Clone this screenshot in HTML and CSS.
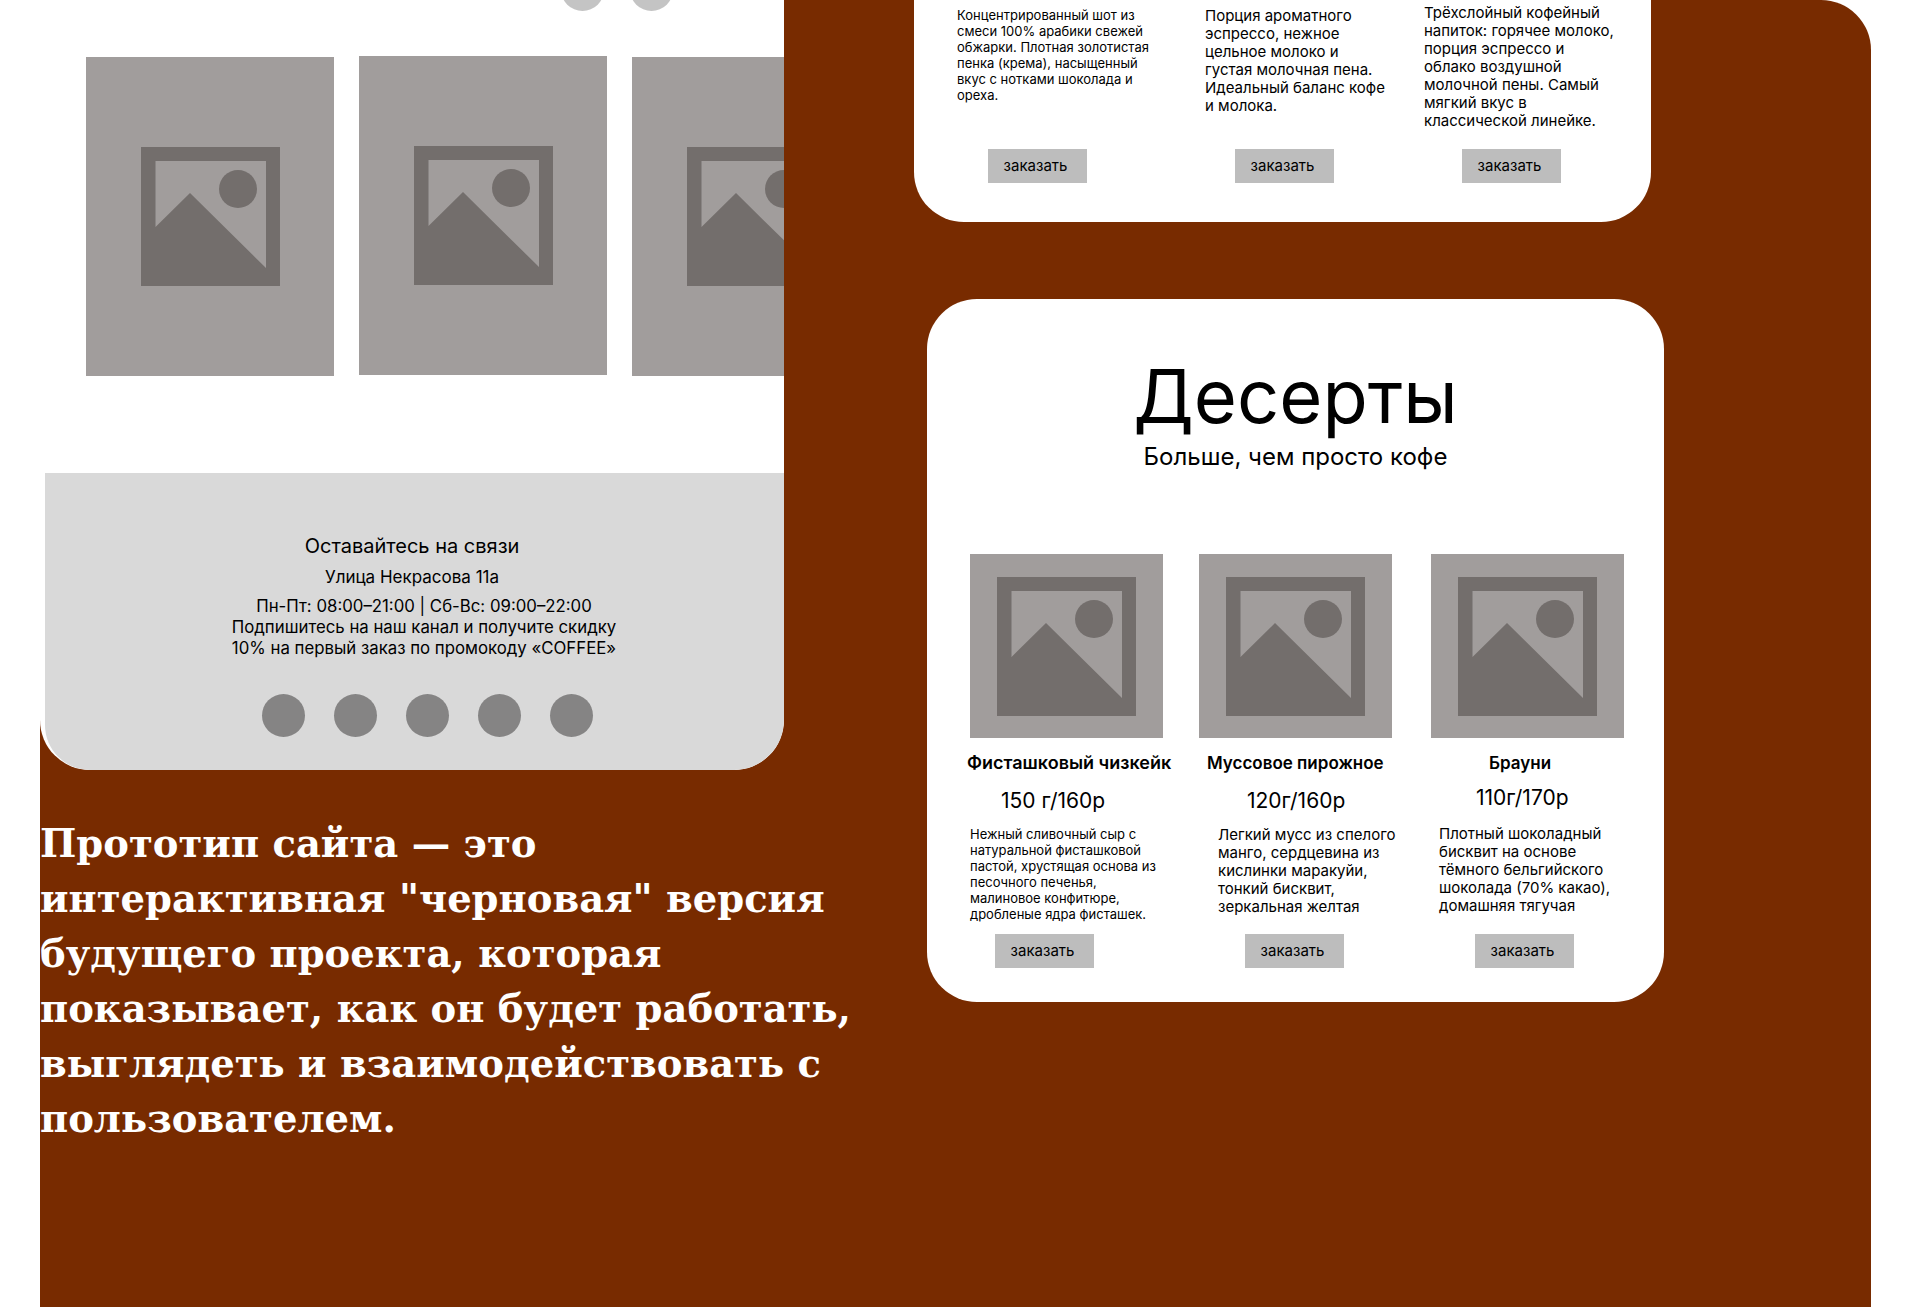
FILE: index.html
```html
<!DOCTYPE html>
<html lang="ru">
<head>
    <meta charset="UTF-8">
    <meta name="viewport" content="width=device-width, initial-scale=1.0">
    <title>Прототип сайта</title>
    <link rel="stylesheet" href="styles.css">
</head>
<body>
    <svg class="defs" width="0" height="0">
        <symbol id="pic" viewBox="0 0 139 139">
            <path fill-rule="evenodd" d="M0 0H139V139H0Z M14.5 14V80L49 46L125 121V14Z"/>
            <circle cx="97" cy="42" r="19"/>
        </symbol>
    </svg>

    <main class="board">
        <section class="left">
            <div class="site">
                <div class="dots">
                    <span class="dot"></span>
                    <span class="dot"></span>
                </div>
                <div class="gallery">
                    <div class="photo"><svg class="pic"><use href="#pic"/></svg></div>
                    <div class="photo photo-up"><svg class="pic"><use href="#pic"/></svg></div>
                    <div class="photo"><svg class="pic"><use href="#pic"/></svg></div>
                </div>
                <footer class="contacts">
                    <h3>Оставайтесь на связи</h3>
                    <p class="street">Улица Некрасова 11а</p>
                    <div class="info">
                        <p>Пн-Пт: 08:00–21:00 | Сб-Вс: 09:00–22:00</p>
                        <p>Подпишитесь на наш канал и получите скидку</p>
                        <p>10% на первый заказ по промокоду «COFFEE»</p>
                    </div>
                    <div class="socials">
                        <span></span><span></span><span></span><span></span><span></span>
                    </div>
                </footer>
            </div>
            <p class="about">Прототип сайта — это интерактивная "черновая" версия будущего проекта, которая показывает, как он будет работать, выглядеть и взаимодействовать с пользователем.</p>
        </section>

        <section class="right">
            <div class="card card-coffee">
                <div class="drink drink-a">
                    <p class="small">Концентрированный шот из смеси 100% арабики свежей обжарки. Плотная золотистая пенка (крема), насыщенный вкус с нотками шоколада и ореха.</p>
                    <button class="order">заказать</button>
                </div>
                <div class="drink drink-b">
                    <p class="text">Порция ароматного эспрессо, нежное цельное молоко и густая молочная пена. Идеальный баланс кофе и молока.</p>
                    <button class="order">заказать</button>
                </div>
                <div class="drink drink-c">
                    <p class="text">Трёхслойный кофейный напиток: горячее молоко, порция эспрессо и облако воздушной молочной пены. Самый мягкий вкус в классической линейке.</p>
                    <button class="order">заказать</button>
                </div>
            </div>

            <div class="card card-desserts">
                <h1>Десерты</h1>
                <p class="lead">Больше, чем просто кофе</p>
                <div class="items">
                    <div class="item item-a">
                        <div class="thumb"><svg class="pic"><use href="#pic"/></svg></div>
                        <h4>Фисташковый чизкейк</h4>
                        <div class="price">150 г/160р</div>
                        <p class="small">Нежный сливочный сыр с натуральной фисташковой пастой, хрустящая основа из песочного печенья, малиновое конфитюре, дробленые ядра фисташек.</p>
                        <button class="order">заказать</button>
                    </div>
                    <div class="item item-b">
                        <div class="thumb"><svg class="pic"><use href="#pic"/></svg></div>
                        <h4>Муссовое пирожное</h4>
                        <div class="price">120г/160р</div>
                        <p class="text">Легкий мусс из спелого манго, сердцевина из кислинки маракуйи, тонкий бисквит, зеркальная желтая</p>
                        <button class="order">заказать</button>
                    </div>
                    <div class="item item-c">
                        <div class="thumb"><svg class="pic"><use href="#pic"/></svg></div>
                        <h4>Брауни</h4>
                        <div class="price">110г/170р</div>
                        <p class="text">Плотный шоколадный бисквит на основе тёмного бельгийского шоколада (70% какао), домашняя тягучая</p>
                        <button class="order">заказать</button>
                    </div>
                </div>
            </div>
        </section>
    </main>
</body>
</html>
```

FILE: styles.css
```css
body {
    margin: 0;
    height: 1307px;
    overflow: hidden;
    background-color: #fff;
    font-family: Inter, "Noto Sans", sans-serif;
    color: #000;
}
h1, h3, h4, p {
    margin: 0;
    font-weight: 400;
}
.defs {
    display: block;
}
.board {
    display: flex;
    margin-left: 40px;
    width: 1831px;
    height: 1307px;
    background-color: #782b00;
    border-top-right-radius: 50px;
}
.pic {
    display: block;
    width: 139px;
    height: 139px;
    fill: #736e6c;
}

/* left column */
.left {
    flex: 0 0 744px;
    min-width: 0;
}
.site {
    height: 770px;
    overflow: hidden;
    background-color: #fff;
    border-radius: 0 0 50px 50px;
}
.dots {
    display: flex;
    gap: 26px;
    margin: -32px 0 0 521px;
}
.dot {
    width: 43px;
    height: 43px;
    border-radius: 50%;
    background-color: #c4c4c4;
}
.gallery {
    display: flex;
    gap: 25px;
    margin: 46px 0 0 46px;
}
.photo {
    display: flex;
    align-items: center;
    justify-content: center;
    flex: 0 0 248px;
    height: 319px;
    background-color: #a19d9c;
}
.photo-up {
    margin-top: -1px;
}
.contacts {
    margin: 97px 0 0 5px;
    height: 297px;
    padding-top: 61px;
    box-sizing: border-box;
    background-color: #d9d9d9;
    border-radius: 0 0 50px 45px;
    text-align: center;
}
.contacts h3 {
    font-size: 20px;
    line-height: 24px;
    margin-left: -5px;
}
.street {
    font-size: 17px;
    line-height: 20px;
    margin: 9px 0 0 -5px;
}
.info {
    font-size: 16.8px;
    line-height: 21px;
    margin: 9px 0 0 19px;
}
.socials {
    display: flex;
    gap: 29px;
    margin: 35px 0 0 217px;
}
.socials span {
    width: 43px;
    height: 43px;
    border-radius: 50%;
    background-color: #858484;
}
.about {
    width: 830px;
    margin-top: 46px;
    font-family: "DejaVu Serif", serif;
    font-weight: 700;
    font-size: 38.5px;
    line-height: 55px;
    color: #fff;
}

/* right column */
.right {
    flex: 0 0 750px;
    margin-left: 130px;
}
.card {
    width: 737px;
    background-color: #fff;
    border-radius: 50px;
    box-sizing: border-box;
}
.card-coffee {
    display: flex;
    height: 222px;
    padding-left: 43px;
    border-radius: 0 0 50px 50px;
}
.small {
    font-size: 13px;
    line-height: 16px;
    width: 195px;
}
.text {
    font-size: 15px;
    line-height: 18px;
    width: 192px;
}
.order {
    display: block;
    width: 99px;
    height: 34px;
    padding: 0 4px 2px 0;
    border: none;
    background-color: #bdbdbd;
    font-family: inherit;
    font-size: 15px;
    color: #000;
}
.drink {
    display: flex;
    flex-direction: column;
    box-sizing: border-box;
    height: 183px;
}
.drink .order {
    margin-top: auto;
}
.drink-a {
    flex: 0 0 248px;
    padding-top: 7px;
}
.drink-a .order {
    margin-left: 31px;
}
.drink-b {
    flex: 0 0 219px;
    padding-top: 7px;
}
.drink-b .text {
    width: 183px;
}
.drink-b .order {
    margin-left: 30px;
}
.drink-c {
    flex: 0 0 200px;
    padding-top: 4px;
}
.drink-c .order {
    margin-left: 38px;
}
.card-desserts {
    height: 703px;
    margin: 77px 0 0 13px;
    padding-top: 51px;
    text-align: center;
}
.card-desserts h1 {
    font-size: 74px;
    line-height: 92px;
}
.lead {
    font-size: 24px;
    line-height: 28px;
    margin-top: 1px;
}
.items {
    display: flex;
    gap: 36px;
    margin-top: 83px;
    padding-left: 43px;
    text-align: left;
}
.item {
    flex: 0 0 193px;
    min-width: 0;
}
.item-c {
    margin-left: 3px;
}
.thumb {
    display: flex;
    align-items: center;
    justify-content: center;
    height: 184px;
    background-color: #a19d9c;
}
.item h4 {
    font-size: 17px;
    font-weight: 600;
    line-height: 20px;
    white-space: nowrap;
    margin-top: 15px;
}
.price {
    font-size: 21px;
    line-height: 24px;
    white-space: nowrap;
    margin-top: 16px;
}
.item-a h4 {
    font-size: 18px;
    margin-left: -3px;
}
.item-a .price {
    margin-left: 31px;
}
.item-a .small {
    margin-top: 13px;
}
.item-a .order {
    margin: 12px 0 0 25px;
}
.item-b h4 {
    margin-left: 8px;
}
.item-b .price {
    margin-left: 48px;
}
.item-b .text {
    margin: 13px 0 0 19px;
}
.item-b .order {
    margin: 18px 0 0 46px;
}
.item-c h4 {
    margin-left: 58px;
}
.item-c .price {
    margin: 13px 0 0 45px;
}
.item-c .text {
    margin: 15px 0 0 8px;
}
.item-c .order {
    margin: 19px 0 0 44px;
}
```
